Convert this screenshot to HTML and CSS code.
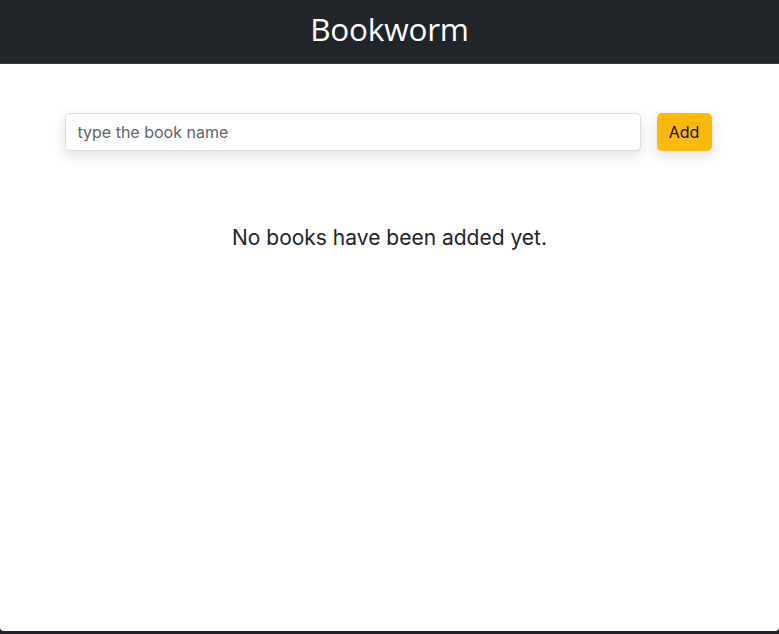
FILE: index.html
```html
<!DOCTYPE html>
<html lang="en">
<head>
<meta charset="utf-8">
<title>Bookworm</title>
<link rel="stylesheet" href="styles.css">
</head>
<body>
<div class="app">
  <header class="topbar">
    <h1 class="brand">Bookworm</h1>
  </header>
  <main class="content">
    <form class="add-form">
      <input class="book-input" type="text" placeholder="type the book name">
      <button class="add-btn" type="button">Add</button>
    </form>
    <p class="empty">No books have been added yet.</p>
  </main>
</div>
</body>
</html>
```

FILE: styles.css
```css
html, body {
  margin: 0;
  padding: 0;
  height: 100%;
  background: #1e2226;
}
body {
  font-family: Inter, "Open Sans", "Liberation Sans", sans-serif;
  color: #212529;
}
.app {
  height: 631px;
  display: flex;
  flex-direction: column;
  background: #ffffff;
  border-radius: 0 0 4px 4px;
  overflow: hidden;
}
.topbar {
  height: 64px;
  background: #212428;
  display: flex;
  align-items: center;
  justify-content: center;
  border-bottom: 1px solid #3a3d41;
  box-sizing: border-box;
}
.brand {
  margin: 0;
  color: #ffffff;
  font-family: "Open Sans", "Noto Sans", sans-serif;
  font-weight: 400;
  font-size: 31.5px;
  letter-spacing: -0.2px;
  line-height: 1;
  padding-bottom: 6px;
}
.content {
  flex: 1;
  padding-top: 49px;
  display: flex;
  flex-direction: column;
  align-items: center;
}
.add-form {
  width: 647px;
  display: flex;
  gap: 16px;
  margin-left: -3px;
}
.book-input {
  flex: 1;
  height: 38px;
  box-sizing: border-box;
  border: 1px solid #dcdde0;
  border-radius: 5px;
  padding: 0 12px;
  font-family: inherit;
  font-size: 16px;
  color: #495057;
  box-shadow: 0 5px 14px rgba(0,0,0,0.13);
  outline: none;
}
.book-input::placeholder {
  color: #5f656b;
}
.add-btn {
  width: 55px;
  height: 38px;
  border: none;
  border-radius: 5px;
  background: #ffb90c;
  color: #111;
  font-family: inherit;
  font-size: 16px;
  box-shadow: 0 5px 14px rgba(0,0,0,0.13);
  padding: 0;
}
.empty {
  margin: 73px 0 0;
  font-size: 21px;
  line-height: 28px;
  font-weight: 400;
  color: #212529;
}
```
